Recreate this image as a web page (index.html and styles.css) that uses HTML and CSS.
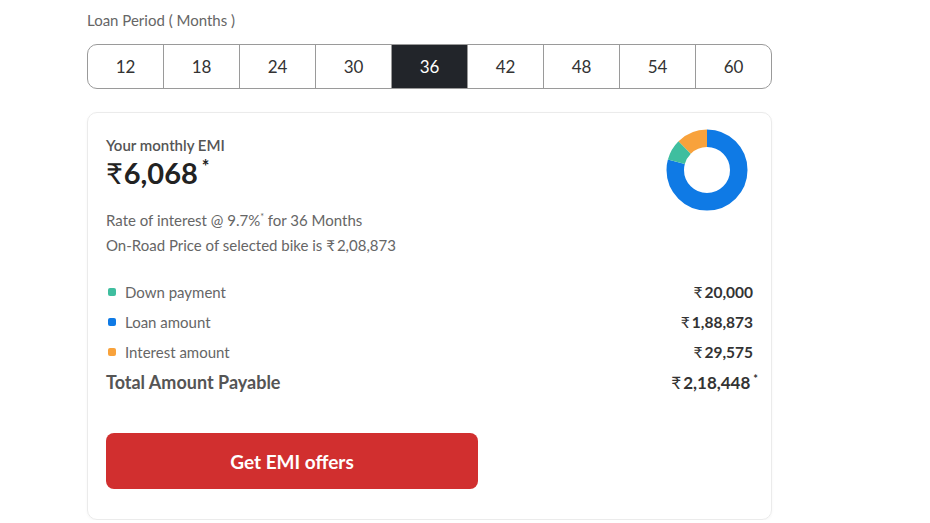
FILE: index.html
```html
<!DOCTYPE html>
<html lang="en">
<head>
    <meta charset="UTF-8">
    <meta name="viewport" content="width=device-width, initial-scale=1.0">
    <title>EMI Calculator</title>
    <link rel="stylesheet" href="styles.css">
</head>
<body>
    <div class="emi-calc">
        <div class="period-label">Loan Period ( Months )</div>
        <div class="period-tabs">
            <div class="tab">12</div>
            <div class="tab">18</div>
            <div class="tab">24</div>
            <div class="tab">30</div>
            <div class="tab active">36</div>
            <div class="tab">42</div>
            <div class="tab">48</div>
            <div class="tab">54</div>
            <div class="tab">60</div>
        </div>

        <div class="emi-card">
            <div class="emi-top">
                <div class="emi-info">
                    <div class="emi-title">Your monthly EMI</div>
                    <div class="emi-amount"><span class="rupee">₹</span>6,068<sup>*</sup></div>
                    <p class="emi-note">Rate of interest @ 9.7%<sup>*</sup> for 36 Months</p>
                    <p class="emi-note">On-Road Price of selected bike is <span class="rupee-sm">₹</span>2,08,873</p>
                </div>
                <!-- donut: down payment / loan / interest share -->
                <svg class="donut" width="82" height="82" viewBox="0 0 82 82">
                    <g transform="rotate(-90 41 41)">
                        <circle cx="41" cy="41" r="31.75" fill="none" stroke="#0f7ae5" stroke-width="17.5" pathLength="100" stroke-dasharray="79.2 100"></circle>
                        <circle cx="41" cy="41" r="31.75" fill="none" stroke="#3fbe9f" stroke-width="17.5" pathLength="100" stroke-dasharray="8.4 100" stroke-dashoffset="-79.2"></circle>
                        <circle cx="41" cy="41" r="31.75" fill="none" stroke="#f8a23c" stroke-width="17.5" pathLength="100" stroke-dasharray="12.4 100" stroke-dashoffset="-87.6"></circle>
                    </g>
                </svg>
            </div>

            <div class="breakup">
                <div class="row">
                    <span class="name"><i class="dot teal"></i>Down payment</span>
                    <span class="value"><span class="rupee-sm">₹</span>20,000</span>
                </div>
                <div class="row">
                    <span class="name"><i class="dot blue"></i>Loan amount</span>
                    <span class="value"><span class="rupee-sm">₹</span>1,88,873</span>
                </div>
                <div class="row">
                    <span class="name"><i class="dot orange"></i>Interest amount</span>
                    <span class="value"><span class="rupee-sm">₹</span>29,575</span>
                </div>
                <div class="row total">
                    <span class="name">Total Amount Payable</span>
                    <span class="value"><span class="rupee-sm">₹</span>2,18,448<sup>*</sup></span>
                </div>
            </div>

            <button class="offer-btn">Get EMI offers</button>
        </div>
    </div>
</body>
</html>
```

FILE: styles.css
```css
* {
    margin: 0;
    padding: 0;
    box-sizing: border-box;
    font-family: Lato, "Open Sans", sans-serif;
}
body {
    background-color: #fff;
    color: #333;
}
sup {
    line-height: 0;
}
.emi-calc {
    width: 685px;
    margin-left: 87px;
    padding-top: 10px;
}
.period-label {
    font-size: 15px;
    line-height: 20px;
    color: #666;
}
.period-tabs {
    display: flex;
    margin-top: 14px;
    height: 45px;
    border: 1px solid #9a9a9a;
    border-radius: 10px;
    overflow: hidden;
}
.tab {
    flex: 1;
    display: flex;
    align-items: center;
    justify-content: center;
    font-size: 17px;
    color: #333;
    border-right: 1px solid #9a9a9a;
}
.tab:last-child {
    border-right: none;
}
.tab.active {
    background-color: #22252a;
    color: #fff;
}
.emi-card {
    margin-top: 23px;
    border: 1px solid #ebebeb;
    border-radius: 10px;
    box-shadow: 0 1px 3px rgba(0,0,0,0.04);
    padding: 20px 18px 30px 18px;
}
.emi-top {
    display: flex;
    justify-content: space-between;
    align-items: flex-start;
}
.emi-title {
    font-size: 15px;
    font-weight: 600;
    color: #555;
    line-height: 24px;
}
.emi-amount {
    font-size: 29px;
    font-weight: 700;
    color: #222;
    line-height: 32px;
}
.emi-amount .rupee {
    font-weight: 400;
    margin-right: 1px;
}
.emi-amount sup {
    font-size: 18px;
    margin-left: 4px;
    vertical-align: 11px;
}
.emi-note {
    font-size: 15px;
    color: #666;
    line-height: 25px;
}
.emi-amount + .emi-note {
    margin-top: 19px;
}
.emi-note sup {
    font-size: 9px;
    vertical-align: 6px;
}
.rupee-sm {
    font-weight: 400;
    margin-right: 2px;
}
.donut {
    margin-top: -4px;
    margin-right: 5px;
}
.breakup {
    margin-top: 19px;
}
.row {
    display: flex;
    justify-content: space-between;
    align-items: center;
    height: 30px;
}
.name {
    display: flex;
    align-items: center;
    font-size: 15px;
    color: #666;
}
.dot {
    width: 8px;
    height: 8px;
    border-radius: 2px;
    margin: 0 9px 0 2px;
}
.dot.teal { background-color: #3fbe9f; }
.dot.blue { background-color: #0f7ae5; }
.dot.orange { background-color: #f8a23c; }
.value {
    font-size: 15.5px;
    font-weight: 700;
    color: #333;
}
.row.total .name {
    font-size: 18px;
    font-weight: 700;
    color: #555;
}
.row.total .value {
    font-size: 17px;
    margin-right: -5px;
}
.row.total sup {
    font-size: 11px;
    margin-left: 3px;
    vertical-align: 6px;
}
.offer-btn {
    display: block;
    margin-top: 36px;
    width: 372px;
    height: 56px;
    border: none;
    border-radius: 8px;
    background-color: #d12f2f;
    color: #fff;
    font-size: 19px;
    font-weight: 700;
    cursor: pointer;
}
```
